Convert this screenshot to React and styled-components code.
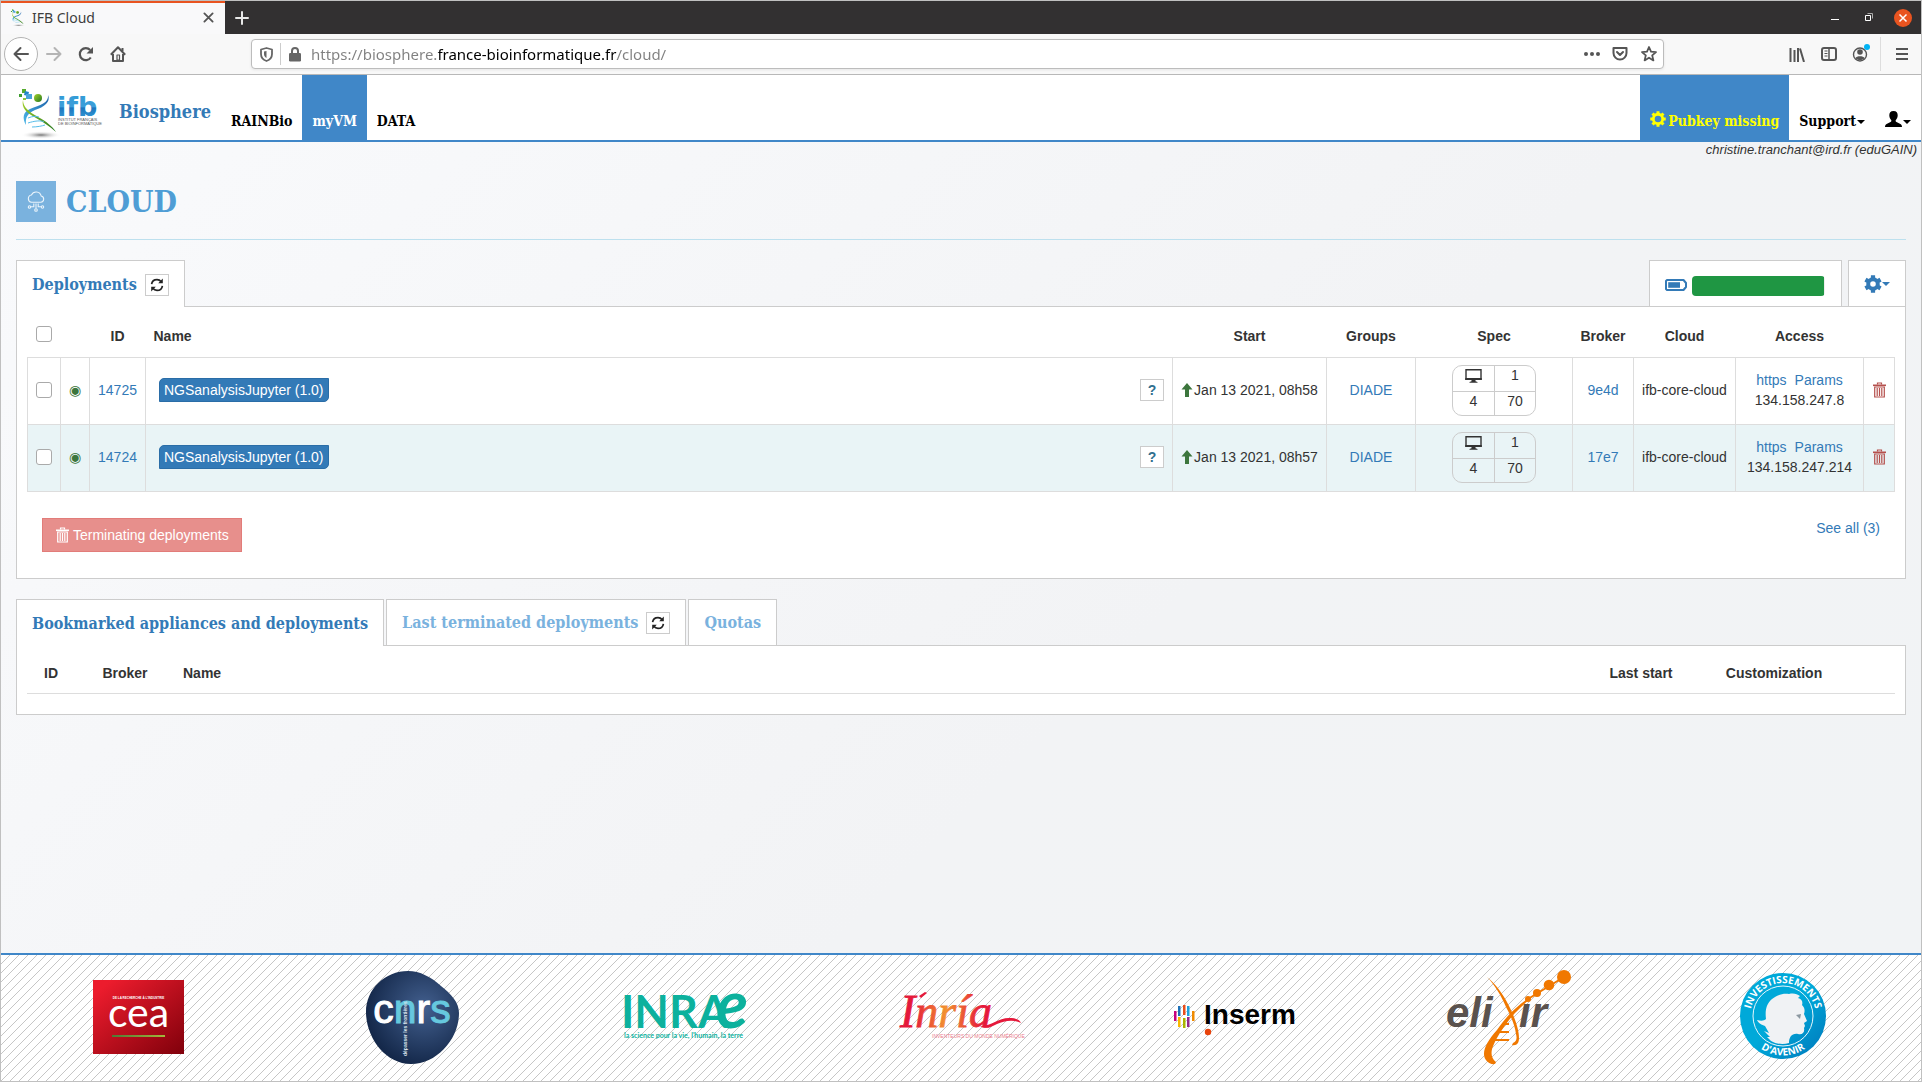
import React from "react";
import styled, { createGlobalStyle } from "styled-components";

const slab = `"DejaVu Serif Condensed", "DejaVu Serif", serif`;
const sans = `"Liberation Sans", Arial, sans-serif`;
const chrome = `"Noto Sans", "Open Sans", sans-serif`;

const Global = createGlobalStyle`
  * { box-sizing: border-box; }
  body { margin: 0; font: 14px/20px ${sans}; color: #333; }
  a { color: #337ab7; text-decoration: none; }
  button { font: inherit; margin: 0; padding: 0; background: none; border: 0; color: inherit; cursor: pointer; }
  svg { display: block; flex: none; }
`;

const Window = styled.div`
  display: flex;
  flex-direction: column;
  min-height: 100vh;
  border: 1px solid #c0c0c0;
`;

/* ---------- browser chrome ---------- */
const TitleBar = styled.div`
  display: flex;
  align-items: stretch;
  height: 33px;
  background: #323031;
  font-family: ${chrome};
`;
const BrowserTab = styled.div`
  display: flex;
  align-items: center;
  width: 224px;
  padding: 0 11px 2px 9px;
  background: #f9f9fa;
  border-top: 2px solid #e95420;
  color: #3d3d3d;
  gap: 7px;
`;
const BrowserTabTitle = styled.span`
  flex: 1;
`;
const TitleButton = styled.button`
  display: flex;
  align-items: center;
  justify-content: center;
  width: 34px;
  color: #e8e8e8;
`;
const WindowButtons = styled.div`
  display: flex;
  margin-left: auto;
  padding-right: 1px;
`;
const Toolbar = styled.div`
  display: flex;
  align-items: center;
  height: 41px;
  padding: 0 2px 0 3px;
  background: #f8f8f8;
  border-bottom: 1px solid #b8b8b8;
`;
const ToolButton = styled.button`
  display: flex;
  align-items: center;
  justify-content: center;
  width: ${(p) => p.$w || 32}px;
  height: 34px;
  color: ${(p) => (p.$dim ? "#b4b4b4" : "#555")};
`;
const BackButton = styled(ToolButton)`
  width: 34px;
  border: 1px solid #b4b4b4;
  border-radius: 50%;
  background: #fff;
`;
const UrlBar = styled.div`
  display: flex;
  align-items: center;
  flex: 1;
  height: 30px;
  margin: 0 117px;
  padding: 0 0 0 8px;
  background: #fff;
  border: 1px solid #bcbcbc;
  border-radius: 4px;
  box-shadow: 0 1px 3px rgba(0, 0, 0, 0.08);
  color: #666;
`;
const UrlDivider = styled.span`
  width: 1px;
  height: 22px;
  margin: 0 8px 0 7px;
  background: #ccc;
`;
const UrlInput = styled.input`
  flex: 1;
  min-width: 0;
  height: 28px;
  margin-left: 10px;
  padding: 0;
  border: 0;
  outline: 0;
  font: 15px/28px ${chrome};
  color: transparent;
  background: linear-gradient(90deg, #808080 127px, #000 127px 306px, #808080 306px);
  -webkit-background-clip: text;
  background-clip: text;
`;
const MenuDivider = styled.span`
  width: 1px;
  height: 34px;
  margin: 0 4px 0 3px;
  background: #ddd;
`;

/* ---------- site header ---------- */
const Nav = styled.nav`
  display: flex;
  align-items: stretch;
  height: 67px;
  background: #fff;
  border-bottom: 2px solid #4087c8;
`;
const LogoLink = styled.a`
  padding: 10px 0 0 14px;
`;
const Brand = styled.a`
  padding: 27px 10px 0 15px;
  font: bold 18px/20px ${slab};
`;
const NavGroup = styled.div`
  display: flex;
  align-items: stretch;
  margin-left: ${(p) => (p.$right ? "auto" : 0)};
`;
const NavLink = styled.a`
  display: flex;
  align-items: flex-end;
  gap: 2px;
  padding: 0 10px 9px;
  font: bold 14px/20px ${slab};
  color: ${(p) => p.$color || "#000"};
  background: ${(p) => (p.$active ? "#4087c8" : "transparent")};
  svg { margin-bottom: 4px; }
`;
const NavMenu = styled.button`
  display: flex;
  align-items: flex-end;
  gap: 1px;
  padding: 0 10px 9px;
  font: bold 14px/20px ${slab};
  color: #000;
  svg { margin-bottom: 4px; }
`;
const Caret = styled.span`
  width: 0;
  margin-bottom: ${(p) => (p.$nav ? 7 : 0)}px;
  border: 4px solid transparent;
  border-top-color: currentColor;
  border-bottom-width: 0;
`;

/* ---------- page ---------- */
const Page = styled.main`
  display: flex;
  flex-direction: column;
  flex: 1;
  background: linear-gradient(135deg, #f9fafc 0%, #f2f3f5 60%, #f1f3f5 100%);
`;
const Account = styled.div`
  height: 39px;
  padding: 0 4px;
  font: italic 13px/16px ${sans};
  text-align: right;
`;
const Content = styled.div`
  padding: 0 15px 40px;
`;
const Heading = styled.header`
  display: flex;
  align-items: center;
  gap: 10px;
  height: 59px;
  padding-bottom: 18px;
  border-bottom: 1px solid #bde0ee;
`;
const HeadingIcon = styled.span`
  display: grid;
  place-items: center;
  width: 40px;
  height: 41px;
  background: #7ab2de;
`;
const Title = styled.h1`
  margin: 0;
  padding-top: 2px;
  font: bold 30px/40px ${slab};
  color: #4f9dd5;
`;
const Section = styled.section`
  margin-top: 20px;
`;
const Tabs = styled.div`
  display: flex;
  align-items: flex-start;
  gap: 2px;
  height: 46px;
`;
const Tab = styled.div`
  display: flex;
  align-items: center;
  gap: 8px;
  height: ${(p) => (p.$active ? 47 : 46)}px;
  padding: 2px 15px 0;
  position: relative;
  background: #fff;
  border: 1px solid #ccc;
  border-bottom: 0;
`;
const TabLabel = styled.button`
  font: bold 16px/24px ${slab};
  color: ${(p) => (p.$active ? "#337ab7" : "#7ab2de")};
`;
const SmallButton = styled.button`
  display: grid;
  place-items: center;
  width: 24px;
  height: 22px;
  background: #fff;
  border: 1px solid #ccc;
  color: ${(p) => p.$color || "#222"};
  font-weight: bold;
`;
const Usage = styled(Tab)`
  gap: 5px;
  margin-left: auto;
  padding: 4px 16px 0 15px;
  color: #337ab7;
`;
const Track = styled.div`
  width: 133px;
  height: 20px;
  background: #eee;
  border-radius: 4px;
  overflow: hidden;
`;
const Fill = styled.div`
  height: 20px;
  background: #1f9643;
`;
const Settings = styled(Tab)`
  width: 58px;
  margin-left: 4px;
  padding: 0;
  justify-content: center;
`;
const SettingsButton = styled.button`
  display: flex;
  align-items: center;
  color: #337ab7;
`;
const Panel = styled.div`
  padding: 0 10px;
  background: #fff;
  border: 1px solid #ccc;
`;
const Table = styled.table`
  width: 100%;
  border-collapse: collapse;
  table-layout: fixed;
`;
const Col = styled.col`
  width: ${(p) => (p.$w ? `${p.$w}px` : "auto")};
`;
const Th = styled.th`
  height: ${(p) => (p.$short ? 48 : 50)}px;
  padding: ${(p) => (p.$left ? "8px 0 0 8px" : "8px 0 0")};
  text-align: ${(p) => (p.$left ? "left" : "center")};
  vertical-align: middle;
`;
const Row = styled.tr`
  height: 67px;
  background: ${(p) => (p.$tint ? "#e9f4f6" : "#fff")};
`;
const Td = styled.td`
  padding: 0 0 2px;
  border: 1px solid #ddd;
  text-align: center;
`;
const Check = styled.input`
  appearance: none;
  display: block;
  width: 16px;
  height: 16px;
  margin: ${(p) => (p.$head ? "-4px auto 0" : "0 auto")};
  background: #fff;
  border: 1px solid #aaa;
  border-radius: 3px;
`;
const Status = styled.span`
  display: block;
  font: 14px/20px "DejaVu Sans", sans-serif;
  color: #3c763d;
`;
const NameCell = styled.div`
  display: flex;
  align-items: center;
  justify-content: space-between;
  padding: 0 8px 0 13px;
`;
const Badge = styled.a`
  padding: 1px 4px;
  background: #337ab7;
  border: 1px solid #2a6da7;
  border-radius: 5px 0;
  color: #fff;
`;
const Inline = styled.div`
  display: flex;
  align-items: center;
  justify-content: center;
  gap: ${(p) => p.$gap || 0}px;
`;
const SpecBox = styled.div`
  display: grid;
  grid-template-columns: 1fr 1fr;
  grid-template-rows: 25px 25px;
  width: 84px;
  height: 51px;
  margin: 2px auto 0;
  border: 1px solid #ccc;
  border-radius: 10px;
`;
const SpecItem = styled.span`
  border-top: ${(p) => (p.$bottom ? "1px solid #ccc" : 0)};
  border-left: ${(p) => (p.$right ? "1px solid #ccc" : 0)};
  display: flex;
  justify-content: center;
  line-height: 18px;
  padding-top: ${(p) => p.$pad || 0}px;
`;
const IconButton = styled.button`
  display: block;
  margin: 0 auto;
  color: ${(p) => p.$color};
`;
const Actions = styled.div`
  display: flex;
  justify-content: space-between;
  align-items: flex-start;
  padding: 26px 15px;
`;
const Terminate = styled.button`
  display: flex;
  align-items: center;
  gap: 4px;
  height: 34px;
  padding: 0 12px 0 13px;
  background: #e78f8c;
  border: 1px solid #e27c79;
  color: #fff;
`;
const EmptyHead = styled.thead`
  border-bottom: 1px solid #ddd;
`;
const EmptySpace = styled.div`
  height: 20px;
`;

/* ---------- footer ---------- */
const Footer = styled.footer`
  display: flex;
  align-items: center;
  height: 128px;
  padding-bottom: 2px;
  border-top: 2px solid #4087c8;
  background: #fff linear-gradient(135deg, transparent 46%, #c6c6c6 46% 54%, transparent 54%) 0 0 / 9px 9px;
`;
const Partner = styled.a`
  flex: 1;
  display: flex;
  justify-content: center;
`;

/* ---------- icons ---------- */
const Stroke = ({ s = 16, w = 2, vb = 16, children }) => (
  <svg width={s} height={s} viewBox={`0 0 ${vb} ${vb}`} fill="none" stroke="currentColor" strokeWidth={w} strokeLinecap="round" strokeLinejoin="round">
    {children}
  </svg>
);
const RefreshIcon = () => (
  <svg width="14" height="14" viewBox="0 0 14 14" fill="none" stroke="currentColor" strokeWidth="1.7">
    <path d="M1.6 6.2C2 3.4 4.200 1.600 7 1.600c1.800 0 3.200.8 4.200 2.100M12.400 7.800c-.4 2.800-2.600 4.600-5.400 4.600-1.800 0-3.200-.8-4.200-2.100" />
    <path d="M12.800.6v4.700H8.200zM1.200 13.400V8.700h4.600z" fill="currentColor" stroke="none" />
  </svg>
);
const TrashIcon = () => (
  <svg width="13" height="16" viewBox="0 0 13 16" fill="none" stroke="currentColor">
    <path d="M4.500 2.500V1h4v1.500" strokeWidth="1.200" />
    <path d="M0 3.300h13" strokeWidth="1.600" />
    <path d="M1.700 5v10h9.600V5z" strokeWidth="1.200" />
    <path d="M4.200 6v8M6.500 6v8M8.800 6v8" strokeWidth="1.200" />
  </svg>
);
const GearIcon = ({ s, hole }) => (
  <svg width={s} height={s} viewBox="0 0 18 18" fill="none" stroke="currentColor">
    <circle cx="9" cy="9" r={hole === "big" ? 5.3 : 4.8} strokeWidth={hole === "big" ? 3.2 : 4} />
    {(hole === "big" ? [0, 45, 90, 135] : [0, 60, 120]).map((a) => (
      <path key={a} d="M9 .3v3M9 14.700v3" strokeWidth={hole === "big" ? 3.4 : 4.2} transform={`rotate(${a} 9 9)`} />
    ))}
  </svg>
);
const UserIcon = () => (
  <svg width="17" height="16" viewBox="0 0 17 16" fill="#000">
    <path d="M8.500 0C5.400 0 4.200 2 4.300 4.600c.1 2.200 1 3.700 2 4.600.2.800 0 1.500-.8 1.900L1.600 13C.5 13.500 0 14.500 0 16h17c0-1.500-.5-2.500-1.600-3l-3.900-1.900c-.8-.4-1-1.100-.8-1.900 1-.9 1.900-2.400 2-4.600C12.800 2 11.600 0 8.500 0z" />
  </svg>
);
const ArrowUpIcon = () => (
  <svg width="12" height="14" viewBox="0 0 12 14" fill="#3c763d">
    <path d="M6 0l5.500 6.500H8V14H4V6.500H.5z" />
  </svg>
);
const MonitorIcon = () => (
  <svg width="17" height="14" viewBox="0 0 17 14">
    <path d="M1 .8h15v9.400H1z" fill="none" stroke="#333" strokeWidth="1.400" />
    <path d="M.3 9h16.400v1.900H.3zM6.500 10.900h4v1.400l2 .7v.8h-8V13l2-.7z" fill="#333" />
  </svg>
);
const BatteryIcon = () => (
  <svg width="22" height="14" viewBox="0 0 22 14">
    <path d="M2 1h16.500l2.500 3v4l-2.500 3H2L1 10V2z" fill="#fff" stroke="#337ab7" strokeWidth="2" strokeLinejoin="round" />
    <path d="M3.200 3.200h11.800v5.600H3.200z" fill="#337ab7" />
  </svg>
);
const CloudIcon = () => (
  <svg width="18" height="22" viewBox="0 0 18 22" fill="none" stroke="#eaf4fb" strokeWidth="1.100">
    <path d="M4.500 12.300h9.300a3.200 3.200 0 0 0 .4-6.300A5.200 5.200 0 0 0 4.400 5a3.700 3.700 0 0 0 .1 7.300z" />
    <path d="M9 13.500v5M6.800 13.500v3.300H3.600M11.200 13.500v3.300h3.200" />
    <circle cx="9" cy="20" r="1.300" /><circle cx="2.500" cy="17" r="1.200" /><circle cx="15.500" cy="17" r="1.200" />
  </svg>
);
const Helix = ({ w, h, vb, wordmark }) => (
  <svg width={w} height={h} viewBox={vb} aria-hidden="true">
    <defs>
      <linearGradient id="hb" x1="0" y1="1" x2="1" y2="0"><stop offset="0" stopColor="#4db8e8" /><stop offset="1" stopColor="#1b5fa8" /></linearGradient>
      <linearGradient id="hg" x1="0" y1="0" x2="1" y2="1"><stop offset="0" stopColor="#a4d22a" /><stop offset="1" stopColor="#23761f" /></linearGradient>
      <linearGradient id="ht" x1="0" y1="0" x2="0" y2="1"><stop offset="0" stopColor="#2e9bd6" /><stop offset=".5" stopColor="#3d9ed9" /><stop offset=".55" stopColor="#1d76bd" /><stop offset="1" stopColor="#3aa5de" /></linearGradient>
      <radialGradient id="hs"><stop offset="0" stopColor="#777" /><stop offset="1" stopColor="#fff" stopOpacity="0" /></radialGradient>
    </defs>
    <ellipse cx="22" cy="47" rx="20" ry="4" fill="url(#hs)" />
    <path d="M0 6h3v3H0z" fill="#3f9e2f" /><path d="M3 1h4v4H3z" fill="#57ab2e" /><path d="M6 3l4 1-1 4-4-1z" fill="#2385c7" /><path d="M7 6h6v5H7z" fill="#4aa3d8" /><path d="M4 10h3v2H4z" fill="#8cc63f" />
    <circle cx="19" cy="10" r="4" fill="url(#hg)" />
    <path d="M29 7c3 7-4 12-13 15-7 3-10 7-9 15-4-7-3-13 4-16C21 17 30 15 29 7z" fill="url(#hb)" />
    <path d="M4 12c0 7 6 12 15 17 9 5 14 9 18 15-7-6-13-10-20-14C8 25 2 20 4 12z" fill="url(#hg)" />
    <path d="M9 30c5-2 8-2 11-1M9 35c6-2 13-3 16-1M13 39c5 0 10-1 13-2" fill="none" stroke="#56bde9" strokeWidth="1" />
    {wordmark && (
      <g>
        <text x="38" y="28" fontFamily="DejaVu Sans, sans-serif" fontWeight="bold" fontSize="27" fill="url(#ht)">ifb</text>
        <g fontFamily="Liberation Sans, sans-serif" fontSize="4" fill="#555"><text x="39" y="33">INSTITUT FRANÇAIS</text><text x="39" y="37">DE BIOINFORMATIQUE</text></g>
      </g>
    )}
  </svg>
);

/* ---------- partner logos ---------- */
const Logo = ({ label, children }) => (
  <Partner href="#" aria-label={label}>
    <svg width="130" height="96" viewBox="0 0 130 96" overflow="visible">{children}</svg>
  </Partner>
);
const Cea = () => (
  <Logo label="CEA">
    <linearGradient id="cea" x1="0" y1="0" x2="1" y2="1"><stop offset=".1" stopColor="#ec1c2d" /><stop offset="1" stopColor="#80000b" /></linearGradient>
    <linearGradient id="ceal"><stop offset="0" stopColor="#4d7a35" /><stop offset="1" stopColor="#a3b83c" /></linearGradient>
    <rect x="20" y="11" width="91" height="74" fill="url(#cea)" />
    <g fill="#fff" textAnchor="middle">
      <text x="65.500" y="30" fontFamily="Liberation Sans, sans-serif" fontWeight="bold" fontSize="3">DE LA RECHERCHE À L'INDUSTRIE</text>
      <text x="65.500" y="58" fontFamily="Lato, sans-serif" fontSize="41">cea</text>
    </g>
    <rect x="39" y="66" width="53" height="2" fill="url(#ceal)" />
  </Logo>
);
const Cnrs = () => (
  <Logo label="CNRS">
    <radialGradient id="cnrs" cx=".62" cy=".4" r=".62"><stop offset="0" stopColor="#43608f" /><stop offset="1" stopColor="#14284a" /></radialGradient>
    <path d="M61 2c12 0 23 6 33 15 10 8 18 16 18 27 0 26-22 51-48 51C38 95 19 68 19 43 19 20 38 2 61 2z" fill="url(#cnrs)" />
    <g fontFamily="Liberation Sans, sans-serif" fontSize="41" fill="#fff" stroke="#fff">
      <text x="65" y="54" textAnchor="middle">c<tspan fill="#66c8de" stroke="#66c8de">n</tspan>r<tspan fill="#66c8de" stroke="#66c8de">s</tspan></text>
    </g>
    <text transform="translate(60 87) rotate(-90)" fontFamily="Liberation Sans, sans-serif" fontWeight="bold" fontSize="5" fill="#dfe6f0">dépasser les frontières</text>
  </Logo>
);
const Inrae = () => (
  <Logo label="INRAE">
    <g fill="#0cb19d" fontFamily="Lato, sans-serif">
      <text x="-1" y="59" fontWeight="bold" fontSize="45">INRA</text>
      <text x="94" y="59" fontWeight="bold" fontStyle="italic" fontSize="66">e</text>
      <text x="2" y="69" fontSize="7" fontWeight="bold">la science pour la vie, l'humain, la terre</text>
    </g>
  </Logo>
);
const Inria = () => (
  <Logo label="Inria">
    <linearGradient id="inria"><stop offset=".15" stopColor="#e5193b" /><stop offset=".5" stopColor="#f29130" /><stop offset=".9" stopColor="#e5193b" /></linearGradient>
    <text x="4" y="58" fontFamily="Liberation Serif, serif" fontStyle="italic" fontSize="46" fill="url(#inria)" stroke="url(#inria)" strokeWidth=".8">Inría</text>
    <path d="M84 57c10 1 18-8 29-8 6 0 10 1 12 5-8-4-17-2-24 1-7 4-12 5-17 2z" fill="#e5193b" />
    <path d="M23 27l6-4 2 1-6 5z" fill="#e5193b" />
    <text x="36" y="69" fontFamily="Liberation Sans, sans-serif" fontSize="5" fill="#ec7d8d">INVENTEURS DU MONDE NUMÉRIQUE</text>
  </Logo>
);
const bars = [[4, 42, "#c6007e"], [8, 37, "#1d70b7"], [13, 36, "#e94e1b"], [17, 37, "#1fa2dc"], [22, 42, "#f08a00"], [8, 48, "#f9b800"], [13, 49, "#aab400"], [17, 48, "#93278f"]];
const Inserm = () => (
  <Logo label="Inserm">
    {bars.map(([x, y, c]) => <rect key={`${x}-${y}`} x={x} y={y} width="2.500" height="10" fill={c} />)}
    <text x="34" y="55" fontFamily="Liberation Sans, sans-serif" fontWeight="bold" fontSize="28">Inserm</text>
    <circle cx="38" cy="63" r="3.200" fill="#e8430b" />
  </Logo>
);
const Elixir = () => (
  <Logo label="Elixir">
    <g fontFamily="Liberation Sans, sans-serif" fontWeight="bold" fontStyle="italic" fontSize="42" fill="#5a524e">
      <text x="1" y="58">eli</text><text x="74" y="58">ır</text>
    </g>
    <g fill="#f07800">
      <path d="M42 8c10 8 18 20 24 33 5 11 8 21 8 28 0 5-2 8-7 7l1-2c4-2 4-5 3-9-1-8-5-18-10-27C56 26 49 15 42 8z" />
      <path d="M84 29c-13 8-24 20-32 32-8 9-13 17-13 24 0 6 5 11 11 10l1-2c-5-4-6-10-2-18 4-9 12-21 21-31 5-5 9-9 14-13z" />
      <circle cx="83" cy="30" r="3" /><circle cx="92" cy="24" r="4" /><circle cx="104" cy="16" r="5.300" /><circle cx="119" cy="8" r="7" />
    </g>
    <path d="M83 30L119 8M57 55h7M52 63h12M48 71h16" stroke="#f07800" strokeWidth="2" />
  </Logo>
);
const Avenir = () => (
  <Logo label="Investissements d'avenir">
    <linearGradient id="av" x1="0" y1="0" x2="1" y2="1"><stop offset=".5" stopColor="#00a9d9" /><stop offset=".9" stopColor="#0080c0" /></linearGradient>
    <circle cx="64" cy="47" r="43" fill="url(#av)" />
    <circle cx="64" cy="47" r="30" fill="none" stroke="#e8f7fc" />
    <path d="M53 30c5-4 11-6 17-5 5-1 8 0 11 2l-2 2c4 1 5 4 4 7 3 3 3 6 2 9l3 7-3 2 1 3-1 2c1 5-2 7-6 6-6-1-9 3-9 9-6 2-13 1-18-2l-4-4 3 0-6-6 5 2-4-7c-3-1-7-3-8-6 4 1 7 1 9-1-1-8 0-15 6-20z" fill="#f0f2f4" />
    <path d="M77 46l5-1-1 5z" fill="#8c98a0" />
    <path id="avt" d="M31 47a33 33 0 0 1 66 0" fill="none" />
    <path id="avb" d="M24.500 47a39.500 39.500 0 0 0 79 0" fill="none" />
    <g fontFamily="Open Sans, sans-serif" fontWeight="bold" fontSize="10" fill="#fff" textAnchor="middle">
      <text><textPath href="#avt" startOffset="50%">INVESTISSEMENTS</textPath></text>
      <text><textPath href="#avb" startOffset="50%">D'AVENIR</textPath></text>
    </g>
  </Logo>
);

const deployments = [
  { id: "14725", start: "Jan 13 2021, 08h58", broker: "9e4d", ip: "134.158.247.8" },
  { id: "14724", start: "Jan 13 2021, 08h57", broker: "17e7", ip: "134.158.247.214" },
];

const Refresh = ({ label }) => (
  <SmallButton aria-label={label}><RefreshIcon /></SmallButton>
);

const DeploymentRow = ({ d, tint }) => (
  <Row $tint={tint}>
    <Td><Check type="checkbox" aria-label={`Select ${d.id}`} /></Td>
    <Td><Status>◉</Status></Td>
    <Td><a href="#">{d.id}</a></Td>
    <Td>
      <NameCell>
        <Badge href="#">NGSanalysisJupyter (1.0)</Badge>
        <SmallButton $color="#31708f">?</SmallButton>
      </NameCell>
    </Td>
    <Td><Inline $gap={1}><ArrowUpIcon />{d.start}</Inline></Td>
    <Td><a href="#">DIADE</a></Td>
    <Td>
      <SpecBox>
        <SpecItem $pad={3}><MonitorIcon /></SpecItem>
        <SpecItem $right>1</SpecItem>
        <SpecItem $bottom>4</SpecItem>
        <SpecItem $bottom $right>70</SpecItem>
      </SpecBox>
    </Td>
    <Td><a href="#">{d.broker}</a></Td>
    <Td>ifb-core-cloud</Td>
    <Td>
      <Inline $gap={8}><a href="#">https</a><a href="#">Params</a></Inline>
      {d.ip}
    </Td>
    <Td><IconButton $color="#b5504d" aria-label={`Delete ${d.id}`}><TrashIcon /></IconButton></Td>
  </Row>
);

export default function App() {
  const usage = 99;
  return (
    <Window>
      <Global />
      <TitleBar>
        <BrowserTab>
          <Helix w={15} h={18} vb="0 0 38 52" />
          <BrowserTabTitle>IFB Cloud</BrowserTabTitle>
          <ToolButton $w={12} aria-label="Close tab"><Stroke s={11} w={2} vb={12}><path d="M1.500 1.500l9 9M10.500 1.500l-9 9" /></Stroke></ToolButton>
        </BrowserTab>
        <TitleButton aria-label="New tab"><Stroke s={14} w={2} vb={14}><path d="M7 1v12M1 7h12" /></Stroke></TitleButton>
        <WindowButtons>
          <TitleButton aria-label="Minimize"><svg width="8" height="8"><path d="M0 5h8v1H0z" fill="#fff" /></svg></TitleButton>
          <TitleButton aria-label="Restore"><svg width="8" height="9" fill="none" stroke="#fff"><path d="M.5 2.500h5v5h-5z" /><path d="M2.500.5h5v5" stroke="#aaa" /></svg></TitleButton>
          <TitleButton aria-label="Close"><svg width="18" height="18"><circle cx="9" cy="9" r="9" fill="#e95420" /><path d="M5.500 5.500l7 7M12.500 5.500l-7 7" stroke="#fff" strokeWidth="1.500" /></svg></TitleButton>
        </WindowButtons>
      </TitleBar>
      <Toolbar>
        <BackButton aria-label="Back"><Stroke><path d="M15 8H1.500M7.500 2L1.500 8l6 6" /></Stroke></BackButton>
        <ToolButton $dim aria-label="Forward"><Stroke><path d="M1 8h13.500M8.500 2l6 6-6 6" /></Stroke></ToolButton>
        <ToolButton aria-label="Reload"><svg width="16" height="16" viewBox="0 0 16 16"><path d="M12.800 11.500a6 6 0 1 1-.6-7.500" fill="none" stroke="currentColor" strokeWidth="2.200" /><path d="M15 1v6.500H8.500z" fill="currentColor" /></svg></ToolButton>
        <ToolButton aria-label="Home"><svg width="16" height="16" viewBox="0 0 16 16" fill="none" stroke="currentColor" strokeWidth="2" strokeLinejoin="round"><path d="M.8 8.800L8 1.300l7.200 7.500" /><path d="M3 8v7h10V8M12.500 2v3" /><path d="M7 9h2.500v5H7z" strokeWidth="1.200" /></svg></ToolButton>
        <UrlBar>
          <svg width="13" height="15" viewBox="0 0 13 15" fill="none" stroke="currentColor" strokeWidth="1.800"><path d="M6.500 1L12 2.500V7c0 3.500-2 5.800-5.500 7C3 12.800 1 10.500 1 7V2.500z" strokeLinejoin="round" /><path d="M6.500 4v7C4.800 10 4 8.800 4 7V4.500z" fill="currentColor" stroke="none" /></svg>
          <UrlDivider />
          <svg width="12" height="15" viewBox="0 0 12 15"><path d="M3 7V4a3 3 0 0 1 6 0v3" fill="none" stroke="currentColor" strokeWidth="2" /><rect y="6" width="12" height="8.500" rx="1.200" fill="currentColor" /></svg>
          <UrlInput aria-label="Address" defaultValue="https://biosphere.france-bioinformatique.fr/cloud/" spellCheck={false} />
          <ToolButton $w={28} aria-label="Page actions"><svg width="16" height="4" fill="currentColor"><circle cx="2" cy="2" r="2" /><circle cx="8" cy="2" r="2" /><circle cx="14" cy="2" r="2" /></svg></ToolButton>
          <ToolButton $w={28} aria-label="Pocket"><Stroke vb={16}><path d="M1.500 2h13v5a6.500 6.500 0 0 1-13 0z" /><path d="M5 6l3 3 3-3" /></Stroke></ToolButton>
          <ToolButton $w={29} aria-label="Bookmark"><Stroke vb={16} w={1.800}><path d="M8 1l2 4.700 5 .4-3.800 3.300 1.200 5L8 11.700l-4.400 2.700 1.200-5L1 6.100l5-.4z" /></Stroke></ToolButton>
        </UrlBar>
        <ToolButton aria-label="Library"><svg width="16" height="15" fill="none" stroke="currentColor" strokeWidth="2"><path d="M1.500 1v14M5.500 3v12M9 1v14M11 1.500L15 15" /></svg></ToolButton>
        <ToolButton aria-label="Sidebar"><svg width="16" height="14" fill="none" stroke="currentColor" strokeWidth="2"><rect x="1" y="1" width="14" height="12" rx="2" /><path d="M8 1v12" strokeWidth="1.500" /><path d="M3.500 4h3M3.500 6.500h3M3.500 9h3" strokeWidth="1" /></svg></ToolButton>
        <ToolButton aria-label="Account"><svg width="18" height="20" viewBox="0 0 18 20"><circle cx="8" cy="10.500" r="6.500" fill="none" stroke="currentColor" strokeWidth="1.400" /><circle cx="8" cy="8" r="2.800" fill="currentColor" /><path d="M3.500 14c1-2.500 8-2.500 9 0-2 2.800-7 2.800-9 0z" fill="currentColor" /><circle cx="15" cy="3" r="3" fill="#00b3f4" /></svg></ToolButton>
        <MenuDivider />
        <ToolButton $w={34} aria-label="Menu"><svg width="12" height="12" fill="none" stroke="currentColor" strokeWidth="2"><path d="M0 1h12M0 6h12M0 11h12" /></svg></ToolButton>
      </Toolbar>

      <Nav>
        <LogoLink href="#" aria-label="IFB"><Helix w={89} h={54} vb="-4 -3 89 54" wordmark /></LogoLink>
        <Brand href="#">Biosphere</Brand>
        <NavGroup>
          <NavLink href="#">RAINBio</NavLink>
          <NavLink href="#" $active $color="#fff">myVM</NavLink>
          <NavLink href="#">DATA</NavLink>
        </NavGroup>
        <NavGroup $right>
          <NavLink href="#" $active $color="#ff0"><GearIcon s={16} hole="big" />Pubkey missing</NavLink>
          <NavMenu>Support<Caret $nav /></NavMenu>
          <NavMenu aria-label="User menu"><UserIcon /><Caret $nav /></NavMenu>
        </NavGroup>
      </Nav>

      <Page>
        <Account>christine.tranchant@ird.fr (eduGAIN)</Account>
        <Content>
          <Heading>
            <HeadingIcon><CloudIcon /></HeadingIcon>
            <Title>CLOUD</Title>
          </Heading>

          <Section>
            <Tabs>
              <Tab $active><TabLabel $active>Deployments</TabLabel><Refresh label="Refresh deployments" /></Tab>
              <Usage><BatteryIcon /><Track><Fill style={{ width: `${usage}%` }} /></Track></Usage>
              <Settings><SettingsButton aria-label="Settings"><GearIcon s={18} /><Caret /></SettingsButton></Settings>
            </Tabs>
            <Panel>
              <Table>
                <colgroup>
                  <Col $w={33} /><Col $w={29} /><Col $w={56} /><Col /><Col $w={154} /><Col $w={89} /><Col $w={157} /><Col $w={61} /><Col $w={102} /><Col $w={128} /><Col $w={31} />
                </colgroup>
                <thead>
                  <tr>
                    <Th><Check $head type="checkbox" aria-label="Select all" /></Th>
                    <Th />
                    <Th>ID</Th><Th $left>Name</Th><Th>Start</Th><Th>Groups</Th><Th>Spec</Th><Th>Broker</Th><Th>Cloud</Th><Th>Access</Th>
                    <Th />
                  </tr>
                </thead>
                <tbody>
                  {deployments.map((d, i) => <DeploymentRow key={d.id} d={d} tint={i % 2 === 1} />)}
                </tbody>
              </Table>
              <Actions>
                <Terminate><TrashIcon />Terminating deployments</Terminate>
                <a href="#">See all (3)</a>
              </Actions>
            </Panel>
          </Section>

          <Section>
            <Tabs>
              <Tab $active><TabLabel $active>Bookmarked appliances and deployments</TabLabel></Tab>
              <Tab><TabLabel>Last terminated deployments</TabLabel><Refresh label="Refresh terminated" /></Tab>
              <Tab><TabLabel>Quotas</TabLabel></Tab>
            </Tabs>
            <Panel>
              <Table>
                <colgroup>
                  <Col $w={48} /><Col $w={100} /><Col /><Col $w={156} /><Col $w={110} /><Col $w={66} />
                </colgroup>
                <EmptyHead>
                  <tr>
                    <Th $short>ID</Th><Th $short>Broker</Th><Th $short $left>Name</Th><Th $short>Last start</Th><Th $short>Customization</Th><Th $short />
                  </tr>
                </EmptyHead>
              </Table>
              <EmptySpace />
            </Panel>
          </Section>
        </Content>
      </Page>

      <Footer>
        <Cea /><Cnrs /><Inrae /><Inria /><Inserm /><Elixir /><Avenir />
      </Footer>
    </Window>
  );
}
